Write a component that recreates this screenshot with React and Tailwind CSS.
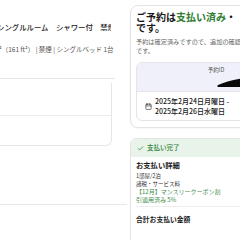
import React from 'react';
import { Calendar, Check } from 'lucide-react';

// 予約確認ページの一部（左：部屋情報、右：予約ステータス）
const App = () => {
  return (
    <div className="w-[240px] h-[240px] overflow-hidden bg-white font-['Noto_Sans_CJK_JP',sans-serif] text-[#1a1a1a]">
      <div className="flex">
        {/* 左カラム */}
        <div className="w-[133px] shrink-0 -ml-[3px]">
          <div className="w-[118px] border-b border-[#e6e6e6] pt-[22px] h-[79px]">
            <div className="w-[114px] overflow-hidden whitespace-nowrap text-[7.4px] leading-[10px] font-medium text-[#222]">
              シングルルーム　シャワー付　禁煙
            </div>
            <div className="mt-[13px] -ml-[4px] whitespace-nowrap text-[6.5px] leading-[9px] text-[#555]">
              m²（161 ft²） | 禁煙 | シングルベッド 1台
            </div>
          </div>
          <div className="w-[115px] mt-[4px] h-[63px] border-r border-b border-[#e6e6e6] rounded-br-[6px]">
            <div className="h-[33px] border-b border-[#ececec]" />
          </div>
          <div className="w-[130px] mt-[4px] h-[55px] border-b border-[#e8e8e8]">
            <div className="pt-[36px] text-[7px] leading-[10px] font-bold whitespace-nowrap -ml-[9px]">
              ・
            </div>
          </div>
        </div>

        {/* 右カラム */}
        <div className="w-[150px] shrink-0">
          <div className="mt-[5px] border border-[#e3e3e3] rounded-[8px] px-[5px] pt-[5px] pb-[6px] shadow-[0_1px_2px_rgba(0,0,0,0.04)]">
            <div className="text-[10px] leading-[11px] font-bold whitespace-nowrap">
              ご予約は<span className="text-[#2e7d32]">支払い済み</span>・
              <br />
              です。
            </div>
            <div className="mt-[4px] text-[6.2px] leading-[9px] text-[#666] whitespace-nowrap">
              予約は確定済みですので、追加の確認は不要
              <br />
              です。
            </div>
            <div className="mt-[7px] border border-[#e4e4ea] rounded-[6px] overflow-hidden">
              <div className="bg-[#eff0fa] h-[28px] flex flex-col items-center pt-[3px]">
                <div className="text-[5.5px] leading-[8px] text-[#555] pl-[22px]">予約ID</div>
                <svg width="48" height="14" viewBox="0 0 48 14" className="ml-[72px] mt-[2px]">
                  <path d="M1 9 C8 6 18 3 30 2 C38 1 44 1 48 2 L48 12 C40 12 30 11 20 11 C12 11 6 11 2 11 C0 11 0 10 1 9 Z" fill="#0a0a0a" />
                </svg>
              </div>
              <div className="border-t border-[#e4e4ea] flex items-center gap-[3px] pl-[8px] h-[29px]">
                <Calendar size={7} strokeWidth={2.2} className="text-[#333] shrink-0" />
                <div className="text-[7px] leading-[10px] font-medium whitespace-nowrap">
                  2025年2月24日月曜日 -
                  <br />
                  2025年2月26日水曜日
                </div>
              </div>
            </div>
          </div>

          <div className="mt-[10px] border border-[#e3e3e3] rounded-t-[6px] h-[120px] overflow-hidden">
            <div className="bg-[#e8f4ea] h-[18px] flex items-center gap-[3px] pl-[6px] text-[#2e7d32]">
              <Check size={7} strokeWidth={2.5} />
              <span className="text-[6.5px] font-medium">支払い完了</span>
            </div>
            <div className="px-[5px] pt-[3px]">
              <div className="text-[7.3px] leading-[11px] font-bold">お支払い詳細</div>
              <div className="mt-[1px] text-[5.5px] leading-[8px] text-[#333]">1部屋/2泊</div>
              <div className="text-[5.5px] leading-[8px] text-[#333]">諸税・サービス料</div>
              <div className="text-[6px] leading-[8px] text-[#3d8c4a] whitespace-nowrap">
                【12月】マンスリークーポン割
                <br />
                引適用済み 5%
              </div>
              <div className="mt-[2px] border-t border-[#eee] pt-[7px] text-[6.8px] leading-[10px] font-bold">
                合計お支払い金額
              </div>
            </div>
          </div>
        </div>
      </div>
    </div>
  );
};

export default App;
